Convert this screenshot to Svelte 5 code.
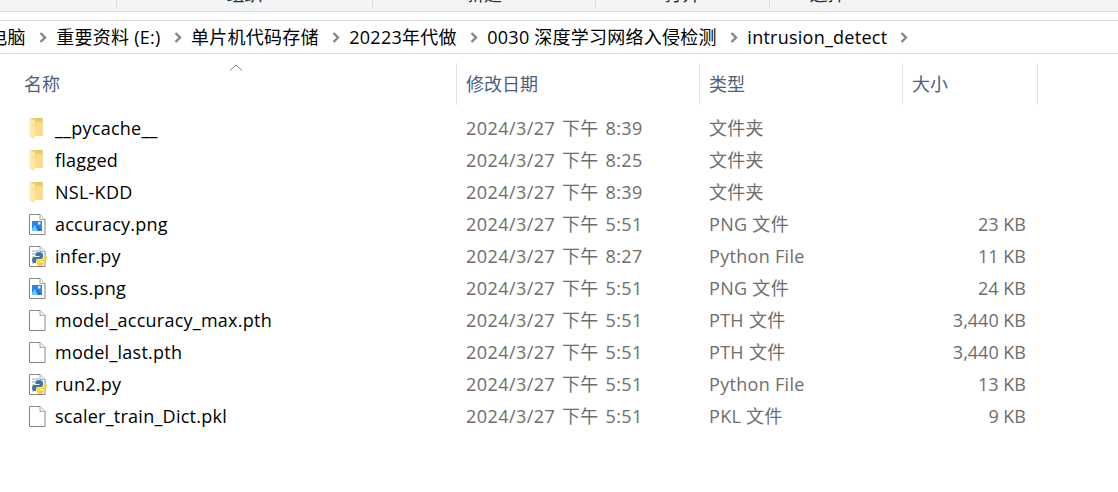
<script>
	const tabs = [
		{ label: '组织', width: 256 },
		{ label: '新建', width: 223 },
		{ label: '打开', width: 174 },
		{ label: '选择', width: 116 },
	];

	const crumbs = ['此电脑', '重要资料 (E:)', '单片机代码存储', '20223年代做', '0030 深度学习网络入侵检测', 'intrusion_detect'];

	const files = [
		{ name: '__pycache__', date: '2024/3/27 下午 8:39', type: '文件夹', size: '', icon: 'folder' },
		{ name: 'flagged', date: '2024/3/27 下午 8:25', type: '文件夹', size: '', icon: 'folder' },
		{ name: 'NSL-KDD', date: '2024/3/27 下午 8:39', type: '文件夹', size: '', icon: 'folder' },
		{ name: 'accuracy.png', date: '2024/3/27 下午 5:51', type: 'PNG 文件', size: '23 KB', icon: 'image' },
		{ name: 'infer.py', date: '2024/3/27 下午 8:27', type: 'Python File', size: '11 KB', icon: 'python' },
		{ name: 'loss.png', date: '2024/3/27 下午 5:51', type: 'PNG 文件', size: '24 KB', icon: 'image' },
		{ name: 'model_accuracy_max.pth', date: '2024/3/27 下午 5:51', type: 'PTH 文件', size: '3,440 KB', icon: 'file' },
		{ name: 'model_last.pth', date: '2024/3/27 下午 5:51', type: 'PTH 文件', size: '3,440 KB', icon: 'file' },
		{ name: 'run2.py', date: '2024/3/27 下午 5:51', type: 'Python File', size: '13 KB', icon: 'python' },
		{ name: 'scaler_train_Dict.pkl', date: '2024/3/27 下午 5:51', type: 'PKL 文件', size: '9 KB', icon: 'file' },
	];
</script>

<div class="explorer">
	<div class="ribbon">
		{#each tabs as tab}
			<div class="tab" style="width: {tab.width - 1}px"><span>{tab.label}</span></div>
		{/each}
	</div>

	<div class="address">
		{#each crumbs as crumb}
			<span class="crumb">{crumb}</span>
			<svg class="chevron" width="8" height="11" viewBox="0 0 8 11"><path d="M1.5 1 L6 5.5 L1.5 10" fill="none" stroke="#858585" stroke-width="2.4" /></svg>
		{/each}
	</div>

	<div class="grid-row header">
		<div class="head name-head">
			名称
			<svg class="sort" width="14" height="7" viewBox="0 0 14 7"><path d="M1 6.5 L7 1 L13 6.5" fill="none" stroke="#7a7a7a" /></svg>
		</div>
		<div class="head">修改日期</div>
		<div class="head">类型</div>
		<div class="head">大小</div>
	</div>

	<div class="list">
		{#each files as file}
			<div class="grid-row item">
				<div class="name">
					<svg class="icon" width="20" height="24" viewBox="0 0 20 24">
						{#if file.icon === 'folder'}
							<path d="M2 2 H16 V20 H2 Z" fill="#eccb70" />
							<path d="M8 6 H16 V20 H8 Z" fill="#f8dd90" />
							<path d="M2 2 L8 4 V23 L2 20.5 Z" fill="#fbe7a2" />
							<path d="M2 2 L2 20.5 L4 21.3 V2.7 Z" fill="#fff1bd" />
						{:else}
							<path d="M2.5 2.5 H13 L18 7.5 V22.5 H2.5 Z" fill="#fff" stroke="#858585" />
							<path d="M13 2.5 V7.5 H18" fill="#f3f3f3" stroke="#a6a6a6" />
							{#if file.icon === 'image'}
								<rect x="5" y="9" width="10" height="10" fill="#2c86e8" />
								<path d="M5 19 L10 13 L15 19 Z" fill="#1c6fd6" />
								<path d="M5 17 L8 13 L11 19 H5 Z" fill="#6cc8f6" />
								<rect x="11" y="10" width="2.5" height="2.5" fill="#d6eefc" />
							{:else if file.icon === 'python'}
								<path d="M5 7 H12 M5 10 H10 M5 13 H8 M5 16 H7 M5 19 H7" stroke="#a8a8a8" />
								<path d="M12 8 C9 8 8.5 9 8.5 10.5 V12 H12.5 V13 H7.5 C6 13 5 14 5 16 C5 18 6 19 7.5 19 H9 V17 C9 15.5 10 15 11.5 15 H14 C15.2 15 16 14.2 16 13 V10.5 C16 9 14.8 8 12 8 Z" fill="#3c77a8" />
								<path d="M13 22 C16 22 16.5 21 16.5 19.5 V18 H12.5 V17 H17.5 C19 17 20 16 20 14 C20 12 19 11 17.5 11 H16.8 V13 C16.8 14.5 15.8 15.6 14 15.6 H11.5 C10.3 15.6 9.5 16.4 9.5 17.6 V19.5 C9.5 21 11 22 13 22 Z" fill="#f7cf45" />
							{/if}
						{/if}
					</svg>
					<span>{file.name}</span>
				</div>
				<div class="cell date">{file.date}</div>
				<div class="cell type">{file.type}</div>
				<div class="cell size">{file.size}</div>
			</div>
		{/each}
	</div>
</div>

<style>
	:global(body) {
		margin: 0;
		background: #fff;
	}

	.explorer {
		height: 492px;
		overflow: hidden;
		font-family: 'Open Sans', 'Noto Sans CJK SC', sans-serif;
		font-size: 18px;
		color: #000;
	}

	.ribbon {
		display: flex;
		height: 11px;
		padding-left: 116px;
		background: #f3f4f6;
		border-bottom: 1px solid #dcdcdc;
		overflow: hidden;
	}

	.tab {
		display: flex;
		justify-content: center;
		align-items: flex-end;
		height: 8px;
		border-left: 1px solid #dfe0e2;
		color: #333;
	}

	.tab span {
		line-height: 18px;
		margin-bottom: 5px;
	}

	.address {
		display: flex;
		align-items: center;
		height: 32px;
		margin-top: 8px;
		margin-left: -29px;
		border-top: 1px solid #dcdcdc;
		border-bottom: 1px solid #dcdcdc;
		white-space: nowrap;
	}

	.crumb {
		line-height: 30px;
		letter-spacing: 0.25px;
	}

	.chevron {
		flex: none;
		margin: 0 9.5px 0 13px;
	}

	.grid-row {
		display: grid;
		grid-template-columns: 456px 243px 203px 136px;
	}

	.header {
		height: 40px;
		margin-top: 9px;
		color: #4c607a;
	}

	.head {
		position: relative;
		line-height: 42px;
		padding-left: 9px;
		border-left: 1px solid #e3e3e3;
	}

	.head.name-head {
		padding-left: 24px;
		border-left: none;
	}

	.head:last-child {
		border-right: 1px solid #e3e3e3;
	}

	.sort {
		position: absolute;
		left: 229px;
		top: 1px;
	}

	.list {
		margin-top: 9px;
	}

	.item {
		height: 32px;
		line-height: 32px;
		color: #6d6d6d;
	}

	.name {
		display: flex;
		align-items: center;
		gap: 8px;
		padding-left: 27px;
		letter-spacing: 0.25px;
		color: #000;
	}

	.icon {
		flex: none;
	}

	.cell {
		padding-left: 10px;
	}

	.cell.date {
		letter-spacing: 0.45px;
		word-spacing: 1.5px;
	}

	.cell.type {
		letter-spacing: 0.3px;
	}

	.cell.size {
		padding: 0 12px 0 0;
		text-align: right;
	}
</style>
